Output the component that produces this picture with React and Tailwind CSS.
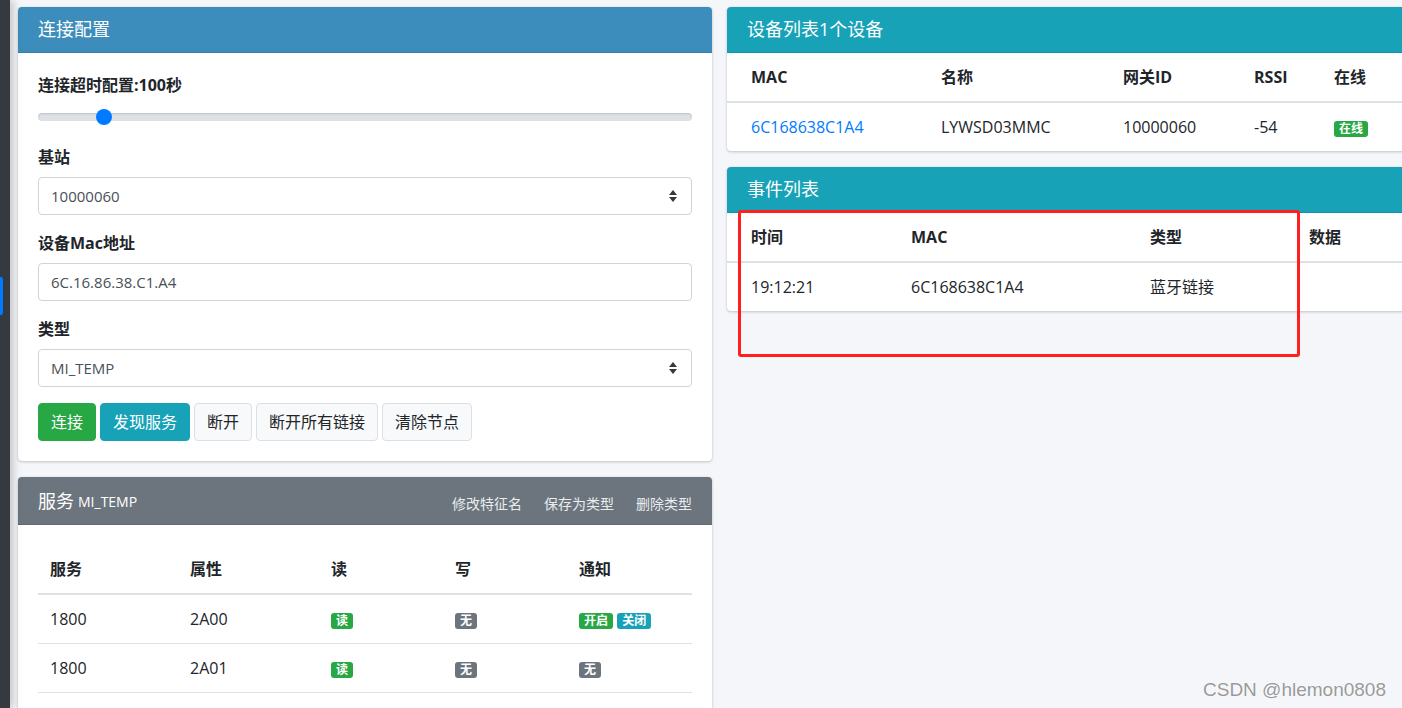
import React from "react";

const FONT = { fontFamily: '"Open Sans", "Noto Sans CJK SC", sans-serif' };

function Caret() {
  return (
    <svg width="8" height="12" viewBox="0 0 8 12" className="absolute right-[14px] top-1/2 -translate-y-1/2">
      <path d="M0 5 L4 0 L8 5 Z" fill="#343a40" />
      <path d="M0 7 L4 12 L8 7 Z" fill="#343a40" />
    </svg>
  );
}

function Badge({ color, children }) {
  return (
    <span className={`inline-block ${color} text-white text-[12px] font-bold leading-none px-[5px] py-[2px] rounded-[3px] align-middle`}>
      {children}
    </span>
  );
}

function FormLabel({ children }) {
  return <div className="text-[16px] font-bold leading-[24px] mb-2 text-[#212529]">{children}</div>;
}

function Select({ value }) {
  return (
    <div className="relative h-[38px] border border-[#ced4da] rounded-[4px] bg-white px-3 flex items-center text-[#495057] text-[15px]">
      {value}
      <Caret />
    </div>
  );
}

const CARD = "shrink-0 bg-white rounded-[4px] shadow-[0_0_1px_rgba(0,0,0,0.13),0_1px_3px_rgba(0,0,0,0.2)] overflow-hidden";

export default function App() {
  return (
    <div className="relative w-[1402px] h-[708px] overflow-hidden bg-[#f4f6f9] flex items-start text-[#212529]" style={FONT}>
      {/* sidebar strip */}
      <div className="relative w-[10px] h-[708px] shrink-0 bg-[#343a40] shadow-[3px_0_8px_rgba(0,0,0,0.22)] z-10">
        <div className="absolute left-0 top-[277px] w-[3px] h-[38px] bg-[#007bff] rounded-r-[2px]" />
      </div>

      <div className="flex items-start gap-[15px] pl-[8px] pt-[7px]">
        {/* left column */}
        <div className="w-[694px] shrink-0 flex flex-col gap-[16px]">
          <div className={CARD}>
            <div className="h-[46px] bg-[#3c8dbc] border-b border-[#357ea8] px-5 flex items-center text-white text-[18px]">
              连接配置
            </div>
            <div className="px-5 pt-5 pb-5">
              <FormLabel>连接超时配置:100秒</FormLabel>
              <div className="relative h-[24px] mb-4 flex items-center">
                <div className="w-full h-[8px] rounded-full bg-[#dee2e6] shadow-[inset_0_1px_2px_rgba(0,0,0,0.15)]" />
                <div className="absolute left-[58px] top-1/2 -translate-y-1/2 w-[16px] h-[16px] rounded-full bg-[#007bff]" />
              </div>

              <FormLabel>基站</FormLabel>
              <div className="mb-4"><Select value="10000060" /></div>

              <FormLabel>设备Mac地址</FormLabel>
              <div className="mb-4 h-[38px] border border-[#ced4da] rounded-[4px] bg-white px-3 flex items-center text-[#495057] text-[15px]">
                6C.16.86.38.C1.A4
              </div>

              <FormLabel>类型</FormLabel>
              <div className="mb-4"><Select value="MI_TEMP" /></div>

              <div className="flex gap-[4px] text-[16px]">
                <button className="h-[38px] px-3 rounded-[4px] bg-[#28a745] border border-[#28a745] text-white">连接</button>
                <button className="h-[38px] px-3 rounded-[4px] bg-[#17a2b8] border border-[#17a2b8] text-white">发现服务</button>
                <button className="h-[38px] px-3 rounded-[4px] bg-[#f8f9fa] border border-[#dcdfe3] text-[#212529]">断开</button>
                <button className="h-[38px] px-3 rounded-[4px] bg-[#f8f9fa] border border-[#dcdfe3] text-[#212529]">断开所有链接</button>
                <button className="h-[38px] px-3 rounded-[4px] bg-[#f8f9fa] border border-[#dcdfe3] text-[#212529]">清除节点</button>
              </div>
            </div>
          </div>

          <div className={CARD}>
            <div className="h-[48px] bg-[#6c757d] border-b border-[#626a71] px-5 flex items-center text-white">
              <span className="text-[18px] mt-[1px]">服务</span>
              <span className="text-[14px] ml-[4px] mt-[2px]">MI_TEMP</span>
              <div className="ml-auto mt-[5px] flex gap-[22px] text-[14px] text-[#e9ecef]">
                <span>修改特征名</span>
                <span>保存为类型</span>
                <span>删除类型</span>
              </div>
            </div>
            <div className="p-5">
              <table className="w-full border-collapse text-[16px] leading-[24px]">
                <thead>
                  <tr className="border-b-2 border-[#dee2e6]">
                    <th className="text-left font-bold px-3 py-3 w-[140px]">服务</th>
                    <th className="text-left font-bold px-3 py-3 w-[141px]">属性</th>
                    <th className="text-left font-bold px-3 py-3 w-[124px]">读</th>
                    <th className="text-left font-bold px-3 py-3 w-[124px]">写</th>
                    <th className="text-left font-bold px-3 py-3">通知</th>
                  </tr>
                </thead>
                <tbody>
                  <tr className="border-b border-[#dee2e6]">
                    <td className="px-3 py-3">1800</td>
                    <td className="px-3 py-3">2A00</td>
                    <td className="px-3 py-3"><Badge color="bg-[#28a745]">读</Badge></td>
                    <td className="px-3 py-3"><Badge color="bg-[#6c757d]">无</Badge></td>
                    <td className="px-3 py-3">
                      <Badge color="bg-[#28a745]">开启</Badge>{" "}
                      <Badge color="bg-[#17a2b8]">关闭</Badge>
                    </td>
                  </tr>
                  <tr className="border-b border-[#dee2e6]">
                    <td className="px-3 py-3">1800</td>
                    <td className="px-3 py-3">2A01</td>
                    <td className="px-3 py-3"><Badge color="bg-[#28a745]">读</Badge></td>
                    <td className="px-3 py-3"><Badge color="bg-[#6c757d]">无</Badge></td>
                    <td className="px-3 py-3"><Badge color="bg-[#6c757d]">无</Badge></td>
                  </tr>
                </tbody>
              </table>
            </div>
          </div>
        </div>

        {/* right column */}
        <div className="w-[694px] shrink-0 flex flex-col gap-[16px]">
          <div className={CARD}>
            <div className="h-[46px] bg-[#17a2b8] border-b border-[#1592a6] px-5 flex items-center text-white text-[18px]">
              设备列表1个设备
            </div>
            <table className="w-full border-collapse text-[16px] leading-[24px]">
              <thead>
                <tr className="border-b-2 border-[#dee2e6]">
                  <th className="text-left font-bold pl-6 pr-3 py-3 w-[202px]">MAC</th>
                  <th className="text-left font-bold px-3 py-3 w-[182px]">名称</th>
                  <th className="text-left font-bold px-3 py-3 w-[131px]">网关ID</th>
                  <th className="text-left font-bold px-3 py-3 w-[80px]">RSSI</th>
                  <th className="text-left font-bold px-3 py-3">在线</th>
                </tr>
              </thead>
              <tbody>
                <tr>
                  <td className="pl-6 pr-3 py-3 text-[#007bff]">6C168638C1A4</td>
                  <td className="px-3 py-3">LYWSD03MMC</td>
                  <td className="px-3 py-3">10000060</td>
                  <td className="px-3 py-3">-54</td>
                  <td className="px-3 py-3"><Badge color="bg-[#28a745]">在线</Badge></td>
                </tr>
              </tbody>
            </table>
          </div>

          <div className={CARD}>
            <div className="h-[46px] bg-[#17a2b8] border-b border-[#1592a6] px-5 flex items-center text-white text-[18px]">
              事件列表
            </div>
            <table className="w-full border-collapse text-[16px] leading-[24px]">
              <thead>
                <tr className="border-b-2 border-[#dee2e6]">
                  <th className="text-left font-bold pl-6 pr-3 py-3 w-[172px]">时间</th>
                  <th className="text-left font-bold px-3 py-3 w-[239px]">MAC</th>
                  <th className="text-left font-bold px-3 py-3 w-[159px]">类型</th>
                  <th className="text-left font-bold px-3 py-3">数据</th>
                </tr>
              </thead>
              <tbody>
                <tr>
                  <td className="pl-6 pr-3 py-3">19:12:21</td>
                  <td className="px-3 py-3">6C168638C1A4</td>
                  <td className="px-3 py-3">蓝牙链接</td>
                  <td className="px-3 py-3"></td>
                </tr>
              </tbody>
            </table>
          </div>
        </div>
      </div>

      {/* annotation box */}
      <div className="absolute left-[738px] top-[210px] w-[562px] h-[147px] border-[3px] border-[#ff1f1f] rounded-[3px] pointer-events-none" />

      {/* watermark */}
      <div
        className="absolute left-[1203px] top-[679px] text-[19px] text-[#9a9a9a] leading-[22px]"
        style={{ fontFamily: '"Liberation Sans", sans-serif', textShadow: "0 0 2px #fff" }}
      >
        CSDN @hlemon0808
      </div>
    </div>
  );
}
